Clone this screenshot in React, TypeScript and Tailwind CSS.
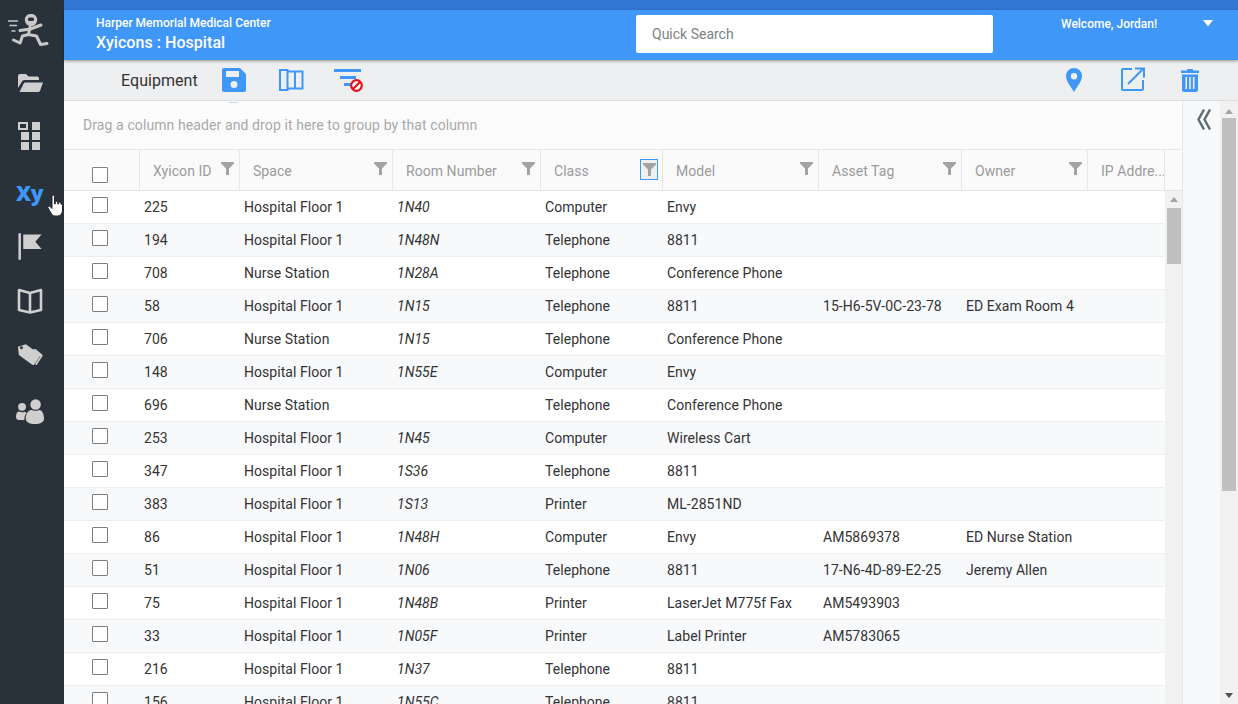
import { ReactNode } from "react";

const COLS = [
  { label: "Xyicon ID", cls: "w-[100px]", filter: true },
  { label: "Space", cls: "w-[153px]", filter: true },
  { label: "Room Number", cls: "w-[148px]", filter: true },
  { label: "Class", cls: "w-[122px]", filter: true, active: true },
  { label: "Model", cls: "w-[156px]", filter: true },
  { label: "Asset Tag", cls: "w-[143px]", filter: true },
  { label: "Owner", cls: "w-[126px]", filter: true },
  { label: "IP Addre...", cls: "w-[77px]", filter: false },
];

const ROWS = [
  ["225", "Hospital Floor 1", "1N40", "Computer", "Envy", "", ""],
  ["194", "Hospital Floor 1", "1N48N", "Telephone", "8811", "", ""],
  ["708", "Nurse Station", "1N28A", "Telephone", "Conference Phone", "", ""],
  ["58", "Hospital Floor 1", "1N15", "Telephone", "8811", "15-H6-5V-0C-23-78", "ED Exam Room 4"],
  ["706", "Nurse Station", "1N15", "Telephone", "Conference Phone", "", ""],
  ["148", "Hospital Floor 1", "1N55E", "Computer", "Envy", "", ""],
  ["696", "Nurse Station", "", "Telephone", "Conference Phone", "", ""],
  ["253", "Hospital Floor 1", "1N45", "Computer", "Wireless Cart", "", ""],
  ["347", "Hospital Floor 1", "1S36", "Telephone", "8811", "", ""],
  ["383", "Hospital Floor 1", "1S13", "Printer", "ML-2851ND", "", ""],
  ["86", "Hospital Floor 1", "1N48H", "Computer", "Envy", "AM5869378", "ED Nurse Station"],
  ["51", "Hospital Floor 1", "1N06", "Telephone", "8811", "17-N6-4D-89-E2-25", "Jeremy Allen"],
  ["75", "Hospital Floor 1", "1N48B", "Printer", "LaserJet M775f Fax", "AM5493903", ""],
  ["33", "Hospital Floor 1", "1N05F", "Printer", "Label Printer", "AM5783065", ""],
  ["216", "Hospital Floor 1", "1N37", "Telephone", "8811", "", ""],
  ["156", "Hospital Floor 1", "1N55C", "Telephone", "8811", "", ""],
];

function FilterIcon({ className = "" }: { className?: string }) {
  return (
    <svg width="13" height="13" viewBox="0 0 13 13" className={className}>
      <path d="M0 0h13v1.6L8 6.6V13H5V6.6L0 1.6z" fill="#a3a3a3" />
    </svg>
  );
}

function NavSlot({ h, children }: { h: string; children: ReactNode }) {
  return <div className={`${h} flex items-center justify-center`}>{children}</div>;
}

function Sidebar() {
  return (
    <div className="w-16 shrink-0 bg-[#29323a] flex flex-col pt-[8px] pr-[5px]">
      <NavSlot h="h-[48px]">
        <svg width="44" height="36" viewBox="7.500 14 44 36" fill="none">
          <g stroke="#c8c8c8" strokeLinecap="round" strokeLinejoin="round">
            <path d="M7 21h10M9.500 25.500h6.500M11.500 31h3" strokeWidth="1.300" />
            <path d="M19.500 30.500 30 29l10.500-4M29.500 27l-1.500 7.500M28 34.500l-6 1.500-2.500 7-6.500-3M28 34.500l8 1.500 4 8.500 6.500-1" strokeWidth="3" />
          </g>
          <circle cx="30.500" cy="20" r="6.200" fill="#c8c8c8" />
          <rect x="27.500" y="17.500" width="6" height="3.500" rx="1.500" fill="#29323a" />
        </svg>
      </NavSlot>
      <NavSlot h="h-[54px]">
        <svg width="26" height="20" viewBox="0 0 26 20" fill="#cfcfcf">
          <path d="M1 15V3a2 2 0 0 1 2-2h6l2.500 2.500H20a2 2 0 0 1 2 2V7H7.500A3 3 0 0 0 4.700 9z" />
          <path d="M2.500 19h18.700a2 2 0 0 0 1.800-1.200L26 9.500H8.300a1.800 1.800 0 0 0-1.600 1.100z" />
        </svg>
      </NavSlot>
      <NavSlot h="h-[52px]">
        <div className="grid grid-cols-[repeat(2,8px)] gap-[2px] ml-[1px]">
          <div className="w-[10px] h-[8px] -ml-[3px] border-[2px] border-[#cfcfcf]" />
          <div className="w-[8px] h-[8px] bg-[#cfcfcf] ml-[1px]" />
          <div className="w-[8px] h-[8px] bg-[#cfcfcf]" />
          <div className="w-[8px] h-[8px] bg-[#cfcfcf] ml-[1px]" />
          <div className="w-[8px] h-[8px] bg-[#cfcfcf]" />
          <div className="w-[8px] h-[8px] bg-[#cfcfcf] ml-[1px]" />
        </div>
      </NavSlot>
      <NavSlot h="h-[64px]">
        <span className="text-[21px] font-extrabold text-[#3f97f8] leading-none font-['Open_Sans',sans-serif] tracking-[-0.5px] -mt-[2px]">Xy</span>
      </NavSlot>
      <NavSlot h="h-[40px]">
        <svg width="24" height="27" viewBox="0 0 24 28" fill="#cfcfcf">
          <rect x="0" y="0" width="2.600" height="28" rx="1.300" />
          <path d="M5 1.500h19l-6.500 7.500 6.500 7.500H5z" />
        </svg>
      </NavSlot>
      <NavSlot h="h-[70px]">
        <svg width="26" height="26" viewBox="0 0 26 26" fill="none" stroke="#cfcfcf" strokeWidth="2.600">
          <path d="M13 5 2 2v20l11 2.500L24 22V2z" strokeLinejoin="round" />
          <path d="M13 5v19" />
        </svg>
      </NavSlot>
      <NavSlot h="h-[38px]">
        <svg width="26" height="23" viewBox="0 0 28 24" fill="#cfcfcf">
          <path d="M1 2.500 9.500 0 24 10.500a2 2 0 0 1 .4 2.800l-5.600 8a2 2 0 0 1-2.800.4L2 11.500z" />
          <circle cx="4.800" cy="3.600" r="1.600" fill="#29323a" />
          <path d="M20 5 27 11a1.600 1.600 0 0 1 .2 2.200L21 22.500l-1.600-1 5.800-8.600L17 5.500z" />
        </svg>
      </NavSlot>
      <NavSlot h="h-[74px]">
        <svg width="28" height="27" viewBox="0 0 30 28" fill="#cfcfcf">
          <circle cx="21" cy="6.500" r="5.600" />
          <path d="M10.500 22c0-7 3.500-9.500 6.500-9.500 1.200 1 6.800 1 8 0 2.500 0 5 3 5 9.500 0 3-3.500 5.500-9.700 5.500S10.500 25 10.500 22z" />
          <circle cx="6.500" cy="9" r="4.200" />
          <path d="M0 19.500C0 16 1.500 14 3.500 14c1.500 1 4.500 1 5.800.2 1 .4 1.700 1 2.200 1.500-1.700 1.500-2.500 4-2.500 7.300H3c-2 0-3-1.500-3-3.500z" />
        </svg>
      </NavSlot>
    </div>
  );
}

function Header() {
  return (
    <div className="shrink-0 relative z-10">
      <div className="h-[10px] bg-[#3277d4]" />
      <div className="h-[50px] bg-[#3f97f8] flex items-start text-white shadow-[0_1px_3px_rgba(0,0,0,0.4)]">
        <div className="w-[572px] pl-[32px] pt-[5px] shrink-0">
          <div className="text-[12px] leading-[16px] font-medium">Harper Memorial Medical Center</div>
          <div className="text-[16px] leading-[20px] mt-[2px] font-medium tracking-[0.05px]">Xyicons : Hospital</div>
        </div>
        <div className="w-[357px] h-[38px] mt-[5px] bg-white rounded-[2px] flex items-center pl-[16px] text-[14px] text-[#808080] shrink-0">
          Quick Search
        </div>
        <div className="ml-[68px] pt-[6px] text-[12px] leading-[16px] font-medium">Welcome, Jordan!</div>
        <svg width="10" height="7" viewBox="0 0 10 7" className="ml-[46px] mt-[10px]">
          <path d="M0 0h10L5 6.500z" fill="#fff" />
        </svg>
      </div>
    </div>
  );
}

function Toolbar() {
  return (
    <div className="h-[41px] shrink-0 bg-[#eeeff1] border-b border-[#dcdcdc] flex items-center text-[#3f97f8] relative">
      <span className="ml-[57px] text-[16px] text-[#333] w-[101px] pt-[1px] tracking-[0.05px]">Equipment</span>
      <svg width="24" height="24" viewBox="0 0 24 24">
        <path fillRule="evenodd" d="M2 0h16l6 6v16a2 2 0 0 1-2 2H2a2 2 0 0 1-2-2V2a2 2 0 0 1 2-2zm2 3v6h13V3zm8 17a3.500 3.500 0 1 0 0-7 3.500 3.500 0 0 0 0 7z" fill="currentColor" />
      </svg>
      <svg width="25" height="22" viewBox="0 0 25 22" className="ml-[33px]" fill="none" stroke="currentColor">
        <rect x="1" y="1" width="7.500" height="20" strokeWidth="2" />
        <path d="M8 2.500h15.500v17H8M16 2.500v17" strokeWidth="2" />
      </svg>
      <svg width="30" height="24" viewBox="0 0 30 24" className="ml-[30px]">
        <path d="M0 1h27v3H0zM6 8h16v3H6zM10 15h8v3h-8z" fill="currentColor" />
        <circle cx="22.500" cy="17.500" r="5.300" fill="#fff" stroke="#e3101a" strokeWidth="2.200" />
        <path d="m19 21 7-7" stroke="#e3101a" strokeWidth="2.200" />
      </svg>
      <div className="flex-1" />
      <svg width="16" height="24" viewBox="0 0 16 24" className="mr-[39px]">
        <path fillRule="evenodd" d="M8 0a8 8 0 0 1 8 8c0 5-5 11-8 16C5 19 0 13 0 8a8 8 0 0 1 8-8zm0 5a3.200 3.200 0 1 0 0 6.400A3.200 3.200 0 0 0 8 5z" fill="currentColor" />
      </svg>
      <svg width="24" height="24" viewBox="0 0 24 24" fill="none" stroke="currentColor" strokeWidth="2" className="mr-[36px] -mt-[2px]">
        <path d="M11 2H2a1 1 0 0 0-1 1v19a1 1 0 0 0 1 1h19a1 1 0 0 0 1-1v-9" />
        <path d="M7 17 22 2M14 1.500h9v9" />
      </svg>
      <svg width="18" height="24" viewBox="0 0 18 24" className="mr-[39px]">
        <path fillRule="evenodd" d="M0 2.500h6V1h6v1.500h6V5H0zM1 6.500h16V22a2 2 0 0 1-2 2H3a2 2 0 0 1-2-2zm3.500 2.500v12H6V9zm3.700 0v12h1.600V9zm3.700 0v12h1.600V9z" fill="currentColor" />
      </svg>
      <div className="absolute left-[165px] top-[42px] w-[9px] h-[1px] bg-[#c5dcf5]" />
    </div>
  );
}

function Checkbox() {
  return <div className="w-4 h-4 border border-[#7f7f7f] bg-white rounded-[1px]" />;
}

function ScrollTrack({ thumb, outer }: { thumb: string; outer?: boolean }) {
  return (
    <div className={`${outer ? "w-[18px] pt-[4px]" : "w-[17px]"} shrink-0 bg-[#f1f1f1] flex flex-col items-center`}>
      <svg width="8" height="5" viewBox="0 0 8 5" className={outer ? "mt-[4px] mb-[4px]" : "mt-[6px] mb-[6px]"}>
        <path d="M4 0l4 5H0z" fill="#a5a5a5" />
      </svg>
      <div className={`${thumb} bg-[#c0c0c0]`} />
      <div className="flex-1" />
      {outer && (
        <svg width="8" height="5" viewBox="0 0 8 5" className="mb-[6px]">
          <path d="M4 5l4-5H0z" fill="#505050" />
        </svg>
      )}
    </div>
  );
}

function Grid() {
  return (
    <div className="flex-1 min-w-0 flex flex-col overflow-hidden">
      <div className="h-[49px] shrink-0 bg-[#fbfbfb] border-b border-[#e6e6e6] flex items-center pl-[19px] text-[14px] tracking-[0.1px] text-[#a9a9a9]">
        Drag a column header and drop it here to group by that column
      </div>
      <div className="h-[41px] shrink-0 flex bg-[#fafafa] border-b border-[#e6e6e6] text-[14px] tracking-[0.05px] text-[#9a9a9a]">
        <div className="w-[76px] shrink-0 border-r border-[#e6e6e6] flex items-end pb-[7px] pl-[28px]">
          <Checkbox />
        </div>
        {COLS.map((c) => (
          <div key={c.label} className={`${c.cls} shrink-0 relative border-r border-[#e6e6e6] pl-[13px] pt-[11px] whitespace-nowrap overflow-hidden`}>
            {c.label}
            {c.filter && !c.active && <FilterIcon className="absolute right-[5px] top-[12px]" />}
            {c.active && (
              <div className="absolute right-[4px] top-[9px] w-[18px] h-[21px] border border-[#3f97f8] bg-[#f0f0f0] flex items-center justify-center">
                <FilterIcon />
              </div>
            )}
          </div>
        ))}
        <div className="flex-1" />
      </div>
      <div className="flex-1 flex min-h-0">
        <div className="flex-1 min-w-0 overflow-hidden">
          {ROWS.map((r, i) => (
            <div key={i} className={`h-[33px] flex border-b border-[#eeeeee] text-[14px] tracking-[0.05px] text-[#333] whitespace-nowrap ${i % 2 ? "bg-[#f8f9fb]" : "bg-white"}`}>
              <div className="w-[76px] shrink-0 pl-[28px] pt-[6px]">
                <Checkbox />
              </div>
              {r.map((v, j) => (
                <div key={j} className={`${COLS[j].cls} shrink-0 pl-[4px] leading-[32px] ${j === 2 ? "italic" : ""}`}>
                  {v}
                </div>
              ))}
            </div>
          ))}
        </div>
        <ScrollTrack thumb="w-[14px] h-[56px]" />
      </div>
    </div>
  );
}

function RightPanel() {
  return (
    <div className="w-[38px] shrink-0 bg-[#f8f9fb] border-l border-[#e6e6e6] flex justify-center pt-[8px]">
      <svg width="14" height="21" viewBox="0 0 14 20" fill="none" stroke="#5f6b73" strokeWidth="2.400" className="ml-[5px]">
        <path d="M7 0 1.500 10 7 20M13 0 7.500 10 13 20" />
      </svg>
    </div>
  );
}

export default function App() {
  return (
    <div className="w-[1238px] h-[704px] flex overflow-hidden relative bg-white font-['Roboto',sans-serif]">
      <Sidebar />
      <div className="flex-1 min-w-0 flex flex-col">
        <Header />
        <Toolbar />
        <div className="flex-1 flex min-h-0">
          <Grid />
          <RightPanel />
          <ScrollTrack outer thumb="w-[14px] h-[373px]" />
        </div>
      </div>
      <svg width="16" height="22" viewBox="0 0 16 22" className="absolute left-[47px] top-[195px]">
        <path d="M5 1.500a1.300 1.300 0 0 1 2.600 0V9l.8-.2V7.500a1.200 1.200 0 0 1 2.400 0V9l.7.1V8.300a1.200 1.200 0 0 1 2.400 0v.9a1.100 1.100 0 0 1 1.600 1V15c0 3-2 6-5 6H8c-2 0-3-1-4-3L1 13c-.8-1.400 1-2.500 2-1.500l2 2z" fill="#fff" stroke="#222" strokeWidth="1" />
      </svg>
    </div>
  );
}
